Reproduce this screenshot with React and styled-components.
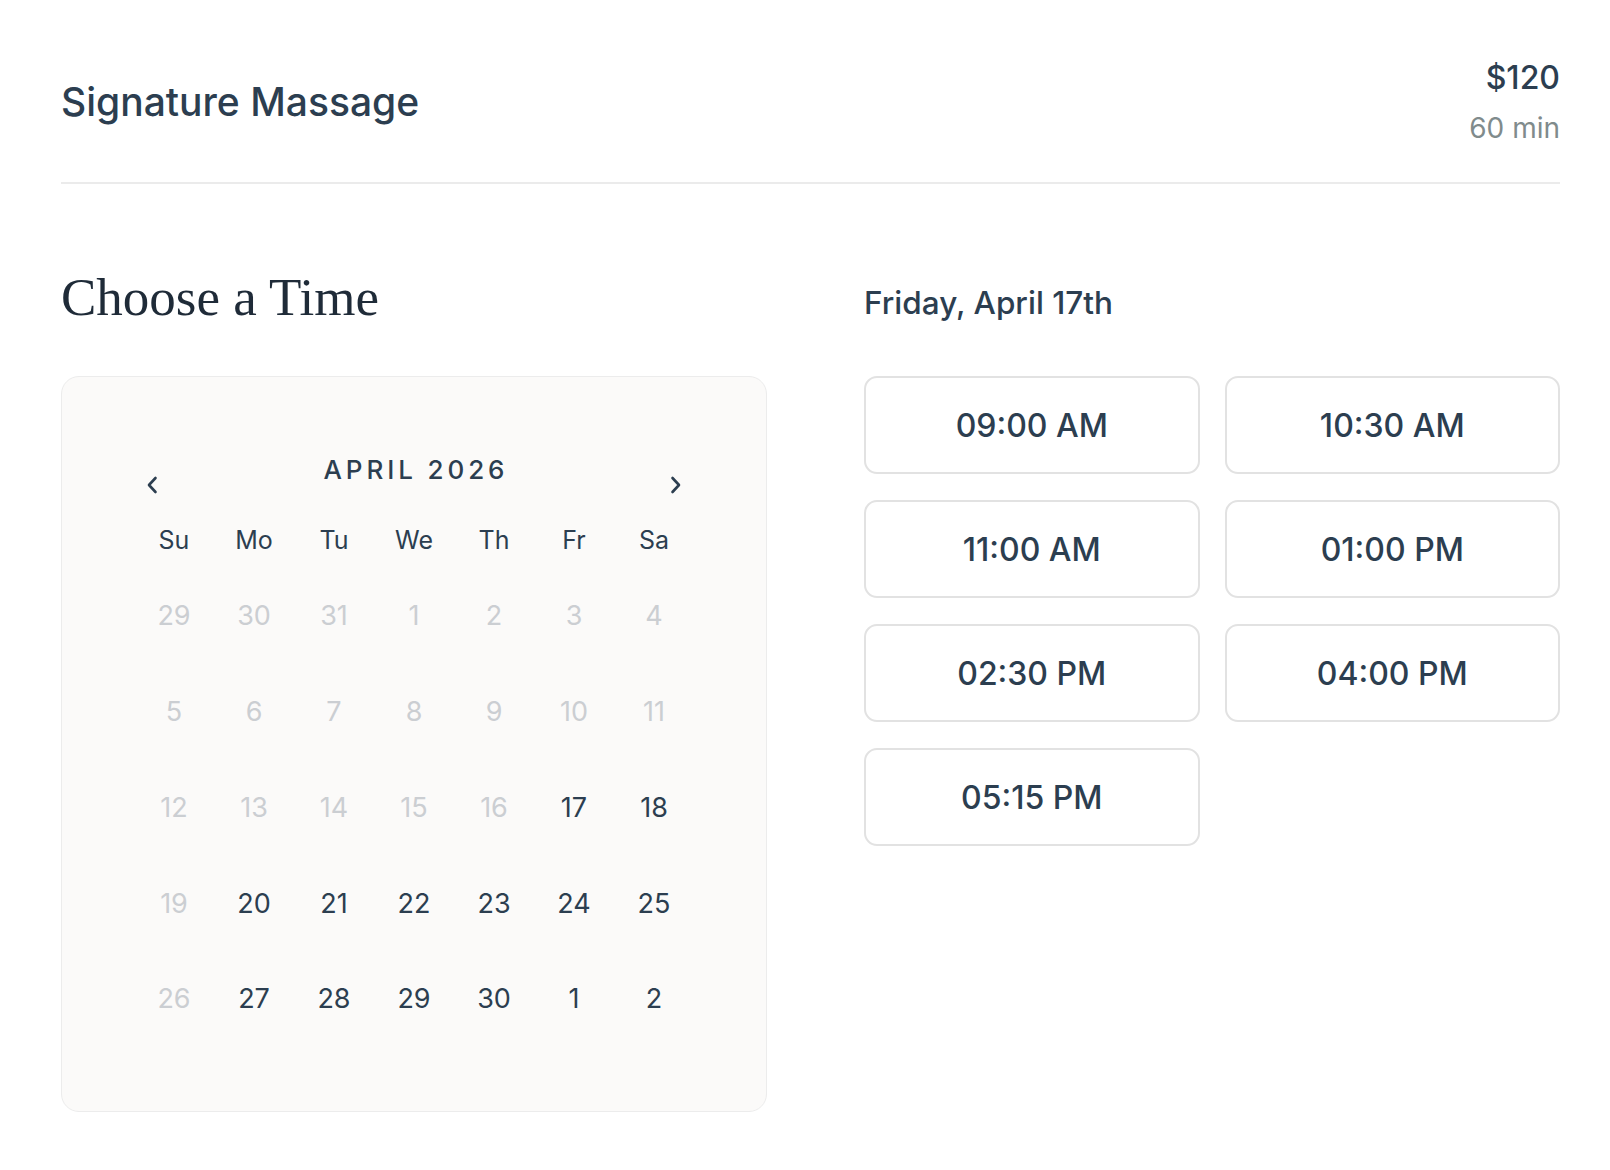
import React from "react";
import styled, { createGlobalStyle } from "styled-components";

const Global = createGlobalStyle`
  html, body { margin: 0; padding: 0; background: #ffffff; }
  body { font-family: Inter, "Noto Sans", sans-serif; color: #2c3e50; -webkit-font-smoothing: antialiased; }
  * { box-sizing: border-box; }
`;

const Page = styled.div`
  width: 1499px;
  margin-left: 61px;
`;

const Header = styled.header`
  display: flex;
  justify-content: space-between;
  align-items: center;
  padding: 58px 0 36px;
  border-bottom: 2px solid #ebebeb;
`;

const ServiceName = styled.h1`
  margin: 0;
  font-size: 39px;
  font-weight: 500;
  line-height: 48px;
  color: #2c3e50;
`;

const PriceBlock = styled.div`
  display: flex;
  flex-direction: column;
  align-items: flex-end;
`;

const Price = styled.div`
  font-size: 32px;
  font-weight: 500;
  line-height: 40px;
  color: #2c3e50;
`;

const Duration = styled.div`
  margin-top: 12px;
  font-size: 28px;
  line-height: 36px;
  color: #808b8c;
`;

const Main = styled.section`
  display: grid;
  grid-template-columns: 706px 1fr;
  column-gap: 97px;
  row-gap: 48px;
  padding-top: 82px;
`;

const SectionTitle = styled.h2`
  margin: 0;
  font-family: "Liberation Serif", "DejaVu Serif", serif;
  font-size: 53px;
  font-weight: 400;
  line-height: 62px;
  color: #1f2b38;
`;

const DateTitle = styled.h3`
  margin: 0 0 6px;
  align-self: end;
  font-size: 31.5px;
  font-weight: 500;
  line-height: 38px;
  color: #2c3e50;
`;

const Card = styled.div`
  background: #fbfaf9;
  border: 1px solid #ececec;
  border-radius: 18px;
  padding: 63px 72px 64px;
`;

const Nav = styled.div`
  display: flex;
  justify-content: space-between;
  align-items: flex-end;
`;

const NavButton = styled.button`
  width: 36px;
  height: 30px;
  padding: 0;
  border: none;
  background: transparent;
  color: #2c3e50;
  display: flex;
  align-items: center;
  justify-content: center;
  cursor: pointer;
`;

const Month = styled.div`
  font-size: 26px;
  font-weight: 500;
  letter-spacing: 0.15em;
  line-height: 60px;
  color: #2c3e50;
  padding-left: 0.15em;
`;

const Weekdays = styled.div`
  display: grid;
  grid-template-columns: repeat(7, 1fr);
  margin-top: 20px;
  height: 40px;
`;

const Weekday = styled.div`
  display: flex;
  align-items: center;
  justify-content: center;
  font-size: 25px;
  color: #2c3e50;
`;

const Days = styled.div`
  display: grid;
  grid-template-columns: repeat(7, 1fr);
  grid-auto-rows: 95.75px;
  margin-top: 8px;
`;

const Day = styled.div`
  display: flex;
  align-items: center;
  justify-content: center;
  font-size: 27px;
  color: ${(p) => (p.$muted ? "#cbced2" : "#2c3e50")};
`;

const Slots = styled.div`
  display: grid;
  grid-template-columns: 1fr 1fr;
  column-gap: 25px;
  row-gap: 26px;
  align-content: start;
`;

const Slot = styled.button`
  height: 98px;
  border: 2px solid #e2e2e2;
  border-radius: 13px;
  background: #ffffff;
  font-family: Inter, "Noto Sans", sans-serif;
  font-size: 32px;
  font-weight: 500;
  color: #2c3e50;
  cursor: pointer;
`;

const Chevron = ({ dir }) => (
  <svg width="14" height="22" viewBox="0 0 14 22" fill="none">
    <path
      d={dir === "left" ? "M10.5 4L4 11l6.5 7" : "M3.5 4L10 11l-6.5 7"}
      stroke="currentColor"
      strokeWidth="2.6"
      strokeLinecap="round"
      strokeLinejoin="round"
    />
  </svg>
);

const weekdays = ["Su", "Mo", "Tu", "We", "Th", "Fr", "Sa"];

const days = [
  [29, true], [30, true], [31, true], [1, true], [2, true], [3, true], [4, true],
  [5, true], [6, true], [7, true], [8, true], [9, true], [10, true], [11, true],
  [12, true], [13, true], [14, true], [15, true], [16, true], [17, false], [18, false],
  [19, true], [20, false], [21, false], [22, false], [23, false], [24, false], [25, false],
  [26, true], [27, false], [28, false], [29, false], [30, false], [1, false], [2, false],
];

const slots = ["09:00 AM", "10:30 AM", "11:00 AM", "01:00 PM", "02:30 PM", "04:00 PM", "05:15 PM"];

export default function App() {
  return (
    <>
      <Global />
      <Page>
        <Header>
          <ServiceName>Signature Massage</ServiceName>
          <PriceBlock>
            <Price>$120</Price>
            <Duration>60 min</Duration>
          </PriceBlock>
        </Header>
        <Main>
          <SectionTitle>Choose a Time</SectionTitle>
          <DateTitle>Friday, April 17th</DateTitle>
          <Card>
            <Nav>
              <NavButton aria-label="Previous month">
                <Chevron dir="left" />
              </NavButton>
              <Month>APRIL 2026</Month>
              <NavButton aria-label="Next month">
                <Chevron dir="right" />
              </NavButton>
            </Nav>
            <Weekdays>
              {weekdays.map((w) => (
                <Weekday key={w}>{w}</Weekday>
              ))}
            </Weekdays>
            <Days>
              {days.map(([n, muted], i) => (
                <Day key={i} $muted={muted}>
                  {n}
                </Day>
              ))}
            </Days>
          </Card>
          <Slots>
            {slots.map((s) => (
              <Slot key={s}>{s}</Slot>
            ))}
          </Slots>
        </Main>
      </Page>
    </>
  );
}
